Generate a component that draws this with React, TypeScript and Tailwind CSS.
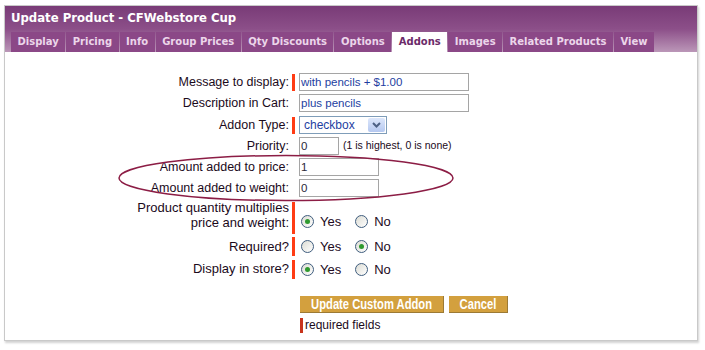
import React from 'react';

const TABS = ['Display', 'Pricing', 'Info', 'Group Prices', 'Qty Discounts', 'Options', 'Addons', 'Images', 'Related Products', 'View'];

function Bar({ show, h = 'h-[17px]' }: { show: boolean; h?: string }) {
  return <span className={`block w-[3px] shrink-0 ${h} ${show ? 'bg-[#ff3c14]' : ''}`} />;
}

function Field({ value, w, dark }: { value: string; w: string; dark?: boolean }) {
  return (
    <div
      className={`${w} h-[18px] border border-[#a5a5a5] bg-white px-[1px] text-[11.5px] leading-[16px] ${dark ? 'text-[#2a2a3a]' : 'text-[#1d3ea1]'}`}
    >
      {value}
    </div>
  );
}

function Radio({ checked, label }: { checked?: boolean; label: string }) {
  return (
    <span className="flex items-center gap-[6px]">
      <span className="flex h-[13px] w-[13px] items-center justify-center rounded-full border border-[#3f5d7e] bg-gradient-to-br from-[#dcdcd4] to-white">
        {checked && <span className="h-[5px] w-[5px] rounded-full bg-[#2f9a2f]" />}
      </span>
      <span className="text-[13px] text-[#220a22]">{label}</span>
    </span>
  );
}

function Row({
  label,
  bar = false,
  children,
  h = 'h-[17px]',
  className = '',
}: {
  label: React.ReactNode;
  bar?: boolean;
  children: React.ReactNode;
  h?: string;
  className?: string;
}) {
  return (
    <div className={`flex items-center ${className}`}>
      <div className="w-[284px] text-right leading-[15px]">{label}</div>
      <div className="ml-[3px]">
        <Bar show={bar} h={h} />
      </div>
      <div className="ml-[4px] flex items-center">{children}</div>
    </div>
  );
}

function RadioPair({ yes }: { yes: boolean }) {
  return (
    <div className="ml-[2px] flex gap-[14px]">
      <Radio checked={yes} label="Yes" />
      <Radio checked={!yes} label="No" />
    </div>
  );
}

function GoldButton({ children, w }: { children: React.ReactNode; w: string }) {
  return (
    <button className={`flex h-[17px] ${w} items-center justify-center border-r border-b border-[#9c7a35] bg-[#d3a03e] text-white`}>
      <span className="inline-block shrink-0 scale-x-[0.8] whitespace-nowrap text-[14px] font-bold leading-[16px]">{children}</span>
    </button>
  );
}

export default function App() {
  return (
    <div className="h-[350px] w-[705px] bg-white pl-[4px] pt-[5px]" style={{ fontFamily: '"Liberation Sans", Arial, sans-serif' }}>
      <div className="relative h-[336px] w-[694px] border border-[#c9c9c9] bg-white shadow-[1px_2px_2px_rgba(0,0,0,0.18)]">
        {/* header */}
        <div className="h-[46px] bg-gradient-to-b from-[#793b77] via-[#8c4f89] to-[#bb97b8] pl-[6px]" style={{ fontFamily: '"DejaVu Sans", Verdana, sans-serif' }}>
          <div className="h-[26px] pt-[4px] text-[11.7px] font-bold leading-[16px] text-white">Update Product - CFWebstore Cup</div>
          <div className="flex h-[20px] gap-px">
            {TABS.map(t => (
              <div
                key={t}
                className={`px-[6.5px] text-[10px] font-bold leading-[20px] ${t === 'Addons' ? 'bg-white text-[#6b2a69]' : 'bg-[#8b4887] text-[#ecd6ea]'}`}
              >
                {t}
              </div>
            ))}
          </div>
        </div>

        {/* form */}
        <div className="relative flex flex-col pt-[21px] text-[12.5px] text-[#1b0a1b]">
          <div className="flex flex-col gap-[3px]">
            <Row label="Message to display:" bar>
              <Field value="with pencils + $1.00" w="w-[170px]" />
            </Row>
            <Row label="Description in Cart:">
              <Field value="plus pencils" w="w-[170px]" />
            </Row>
            <Row label="Addon Type:" bar className="mt-[1px]">
              <div className="flex h-[18px] w-[88px] items-center border border-[#7f9db9] bg-white pl-[4px] text-[12px] text-[#1d3ea1]">
                <span className="flex-1">checkbox</span>
                <span className="mr-[1px] flex h-[14px] w-[17px] items-center justify-center rounded-[2px] bg-gradient-to-b from-[#dde7fb] to-[#b5c8f0]">
                  <svg width="9" height="6" viewBox="0 0 9 6">
                    <path d="M1 1l3.5 3.5L8 1" fill="none" stroke="#4d6185" strokeWidth="2" />
                  </svg>
                </span>
              </div>
            </Row>
            <Row label="Priority:">
              <Field value="0" w="w-[40px]" dark />
              <span className="ml-[4px] text-[10.5px] text-[#1b0a1b]">(1 is highest, 0 is none)</span>
            </Row>
            <Row label="Amount added to price:">
              <Field value="1" w="w-[80px]" dark />
            </Row>
            <Row label="Amount added to weight:">
              <Field value="0" w="w-[80px]" dark />
            </Row>
          </div>

          <div className="mt-[3px] flex items-start">
            <div className="w-[284px] text-right text-[13px] leading-[15px]">
              Product quantity multiplies
              <br />
              price and weight:
            </div>
            <div className="ml-[3px] mt-[2px]">
              <Bar show h="h-[32px]" />
            </div>
            <div className="ml-[4px] mt-[12px]">
              <RadioPair yes />
            </div>
          </div>

          <Row label={<span className="text-[13px]">Required?</span>} bar h="h-[19px]" className="mt-[3px]">
            <RadioPair yes={false} />
          </Row>
          <Row label={<span className="text-[13px]">Display in store?</span>} bar h="h-[19px]" className="mt-[3px]">
            <RadioPair yes />
          </Row>

          <div className="ml-[295px] mt-[17px] flex gap-[5px]">
            <GoldButton w="w-[144px]">Update Custom Addon</GoldButton>
            <GoldButton w="w-[59px]">Cancel</GoldButton>
          </div>
          <div className="ml-[295px] mt-[3px] flex items-center gap-[2px]">
            <span className="h-[15px] w-[3px] bg-[#c8341c]" />
            <span className="text-[12px] text-[#1b0a1b]">required fields</span>
          </div>

          <svg className="pointer-events-none absolute left-0 top-0" width="694" height="300">
            <ellipse cx="281" cy="126" rx="167" ry="22.5" fill="none" stroke="#8c1d45" strokeWidth="1.5" />
          </svg>
        </div>
      </div>
    </div>
  );
}
